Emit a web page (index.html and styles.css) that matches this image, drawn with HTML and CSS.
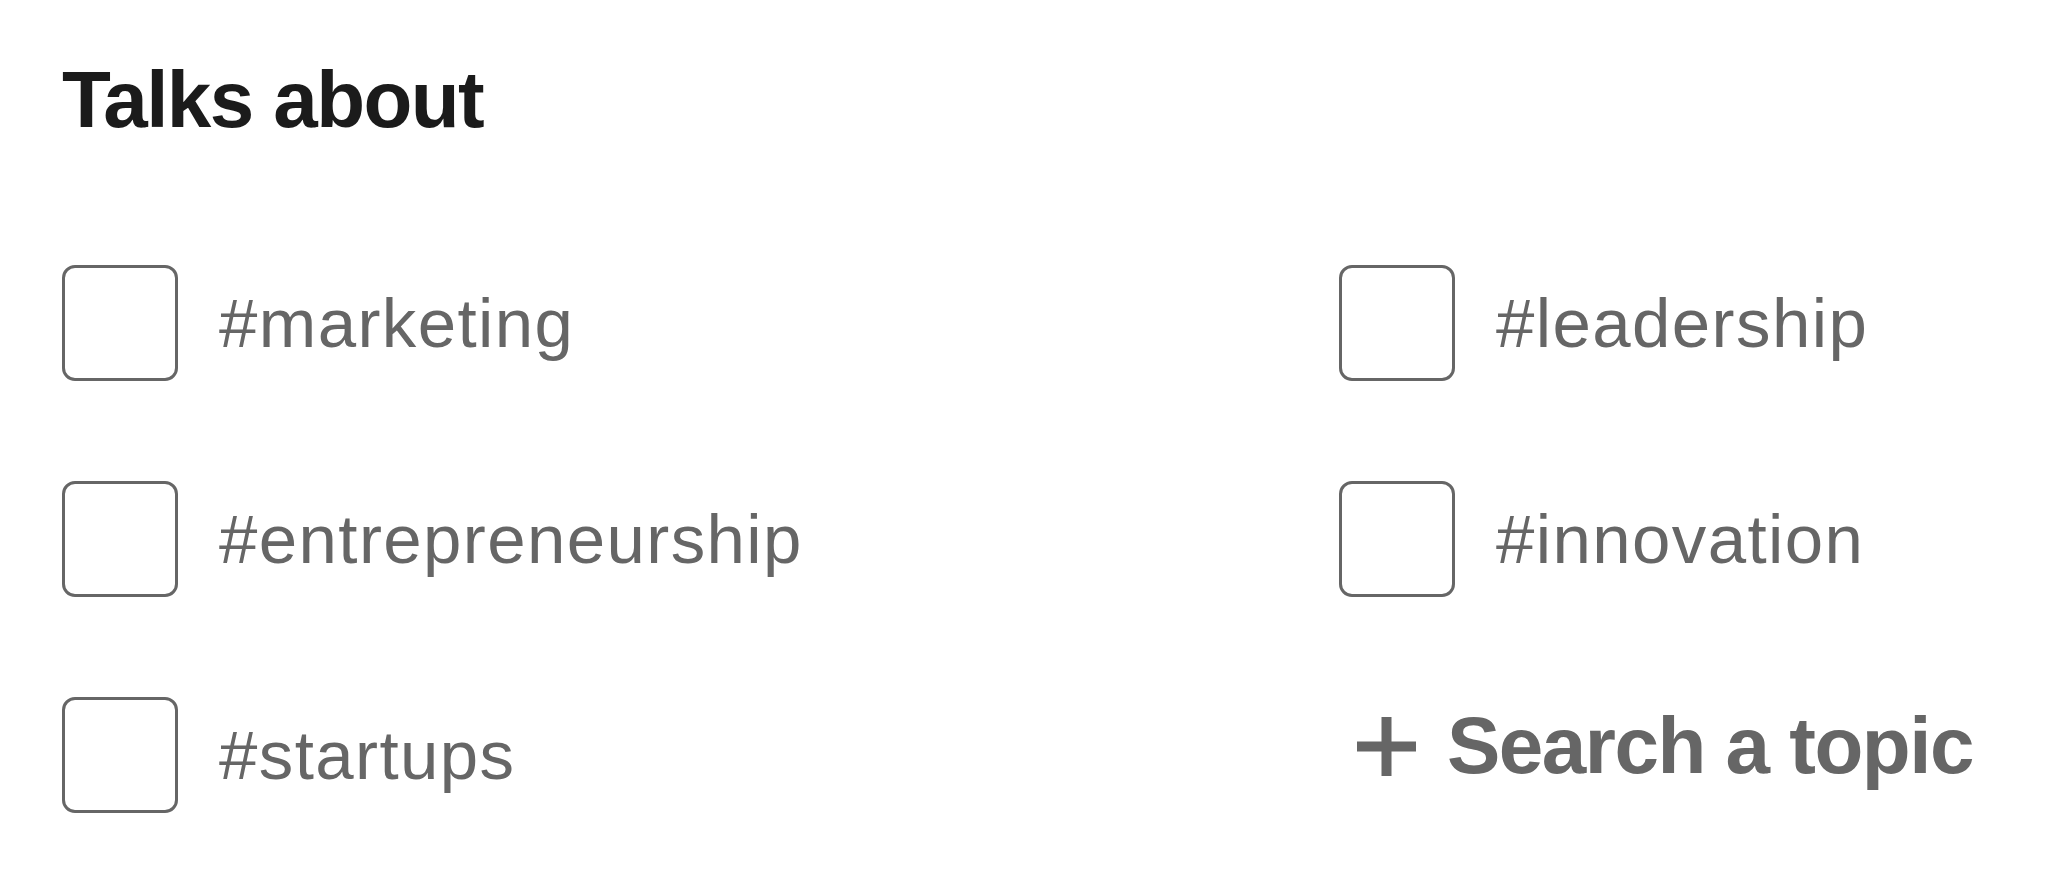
FILE: index.html
```html
<!DOCTYPE html>
<html lang="en">
<head>
  <meta charset="UTF-8">
  <meta name="viewport" content="width=device-width, initial-scale=1.0">
  <title>Talks about</title>
  <link rel="stylesheet" href="styles.css">
</head>
<body>
  <div class="container">
    <h1>Talks about</h1>
    <div class="topics">
      <label class="topic"><input type="checkbox"><span class="box"></span><span>#marketing</span></label>
      <label class="topic"><input type="checkbox"><span class="box"></span><span>#leadership</span></label>
      <label class="topic"><input type="checkbox"><span class="box"></span><span>#entrepreneurship</span></label>
      <label class="topic"><input type="checkbox"><span class="box"></span><span>#innovation</span></label>
      <label class="topic"><input type="checkbox"><span class="box"></span><span>#startups</span></label>
      <a class="search" href="#">
        <svg width="59" height="59" viewBox="0 0 59 59" aria-hidden="true">
          <path d="M29.5 0V59M0 29.5H59" stroke="#666" stroke-width="10" fill="none"/>
        </svg>
        <span>Search a topic</span>
      </a>
    </div>
  </div>
</body>
</html>
```

FILE: styles.css
```css
body {
  margin: 0;
  padding: 0;
  background: #fff;
  font-family: "Liberation Sans", Arial, sans-serif;
}
.container {
  padding: 60px 62px 0;
}
h1 {
  margin: 0;
  font-size: 80px;
  line-height: 1;
  font-weight: bold;
  letter-spacing: -1.6px;
  color: #1b1b1b;
}
.topics {
  display: grid;
  grid-template-columns: 1277px auto;
  row-gap: 100px;
  margin-top: 125px;
}
.topic {
  display: flex;
  align-items: center;
  gap: 41px;
  font-size: 69px;
  line-height: 1;
  letter-spacing: 1.4px;
  color: #666;
  cursor: pointer;
}
.topic input {
  display: none;
}
.box {
  width: 116px;
  height: 116px;
  box-sizing: border-box;
  border: 3.5px solid #666;
  border-radius: 13px;
  flex-shrink: 0;
}
.search {
  display: flex;
  align-items: center;
  gap: 31px;
  padding-left: 18px;
  margin-bottom: 18px;
  font-size: 80px;
  line-height: 1;
  font-weight: bold;
  letter-spacing: -1.5px;
  color: #666;
  text-decoration: none;
}
```
